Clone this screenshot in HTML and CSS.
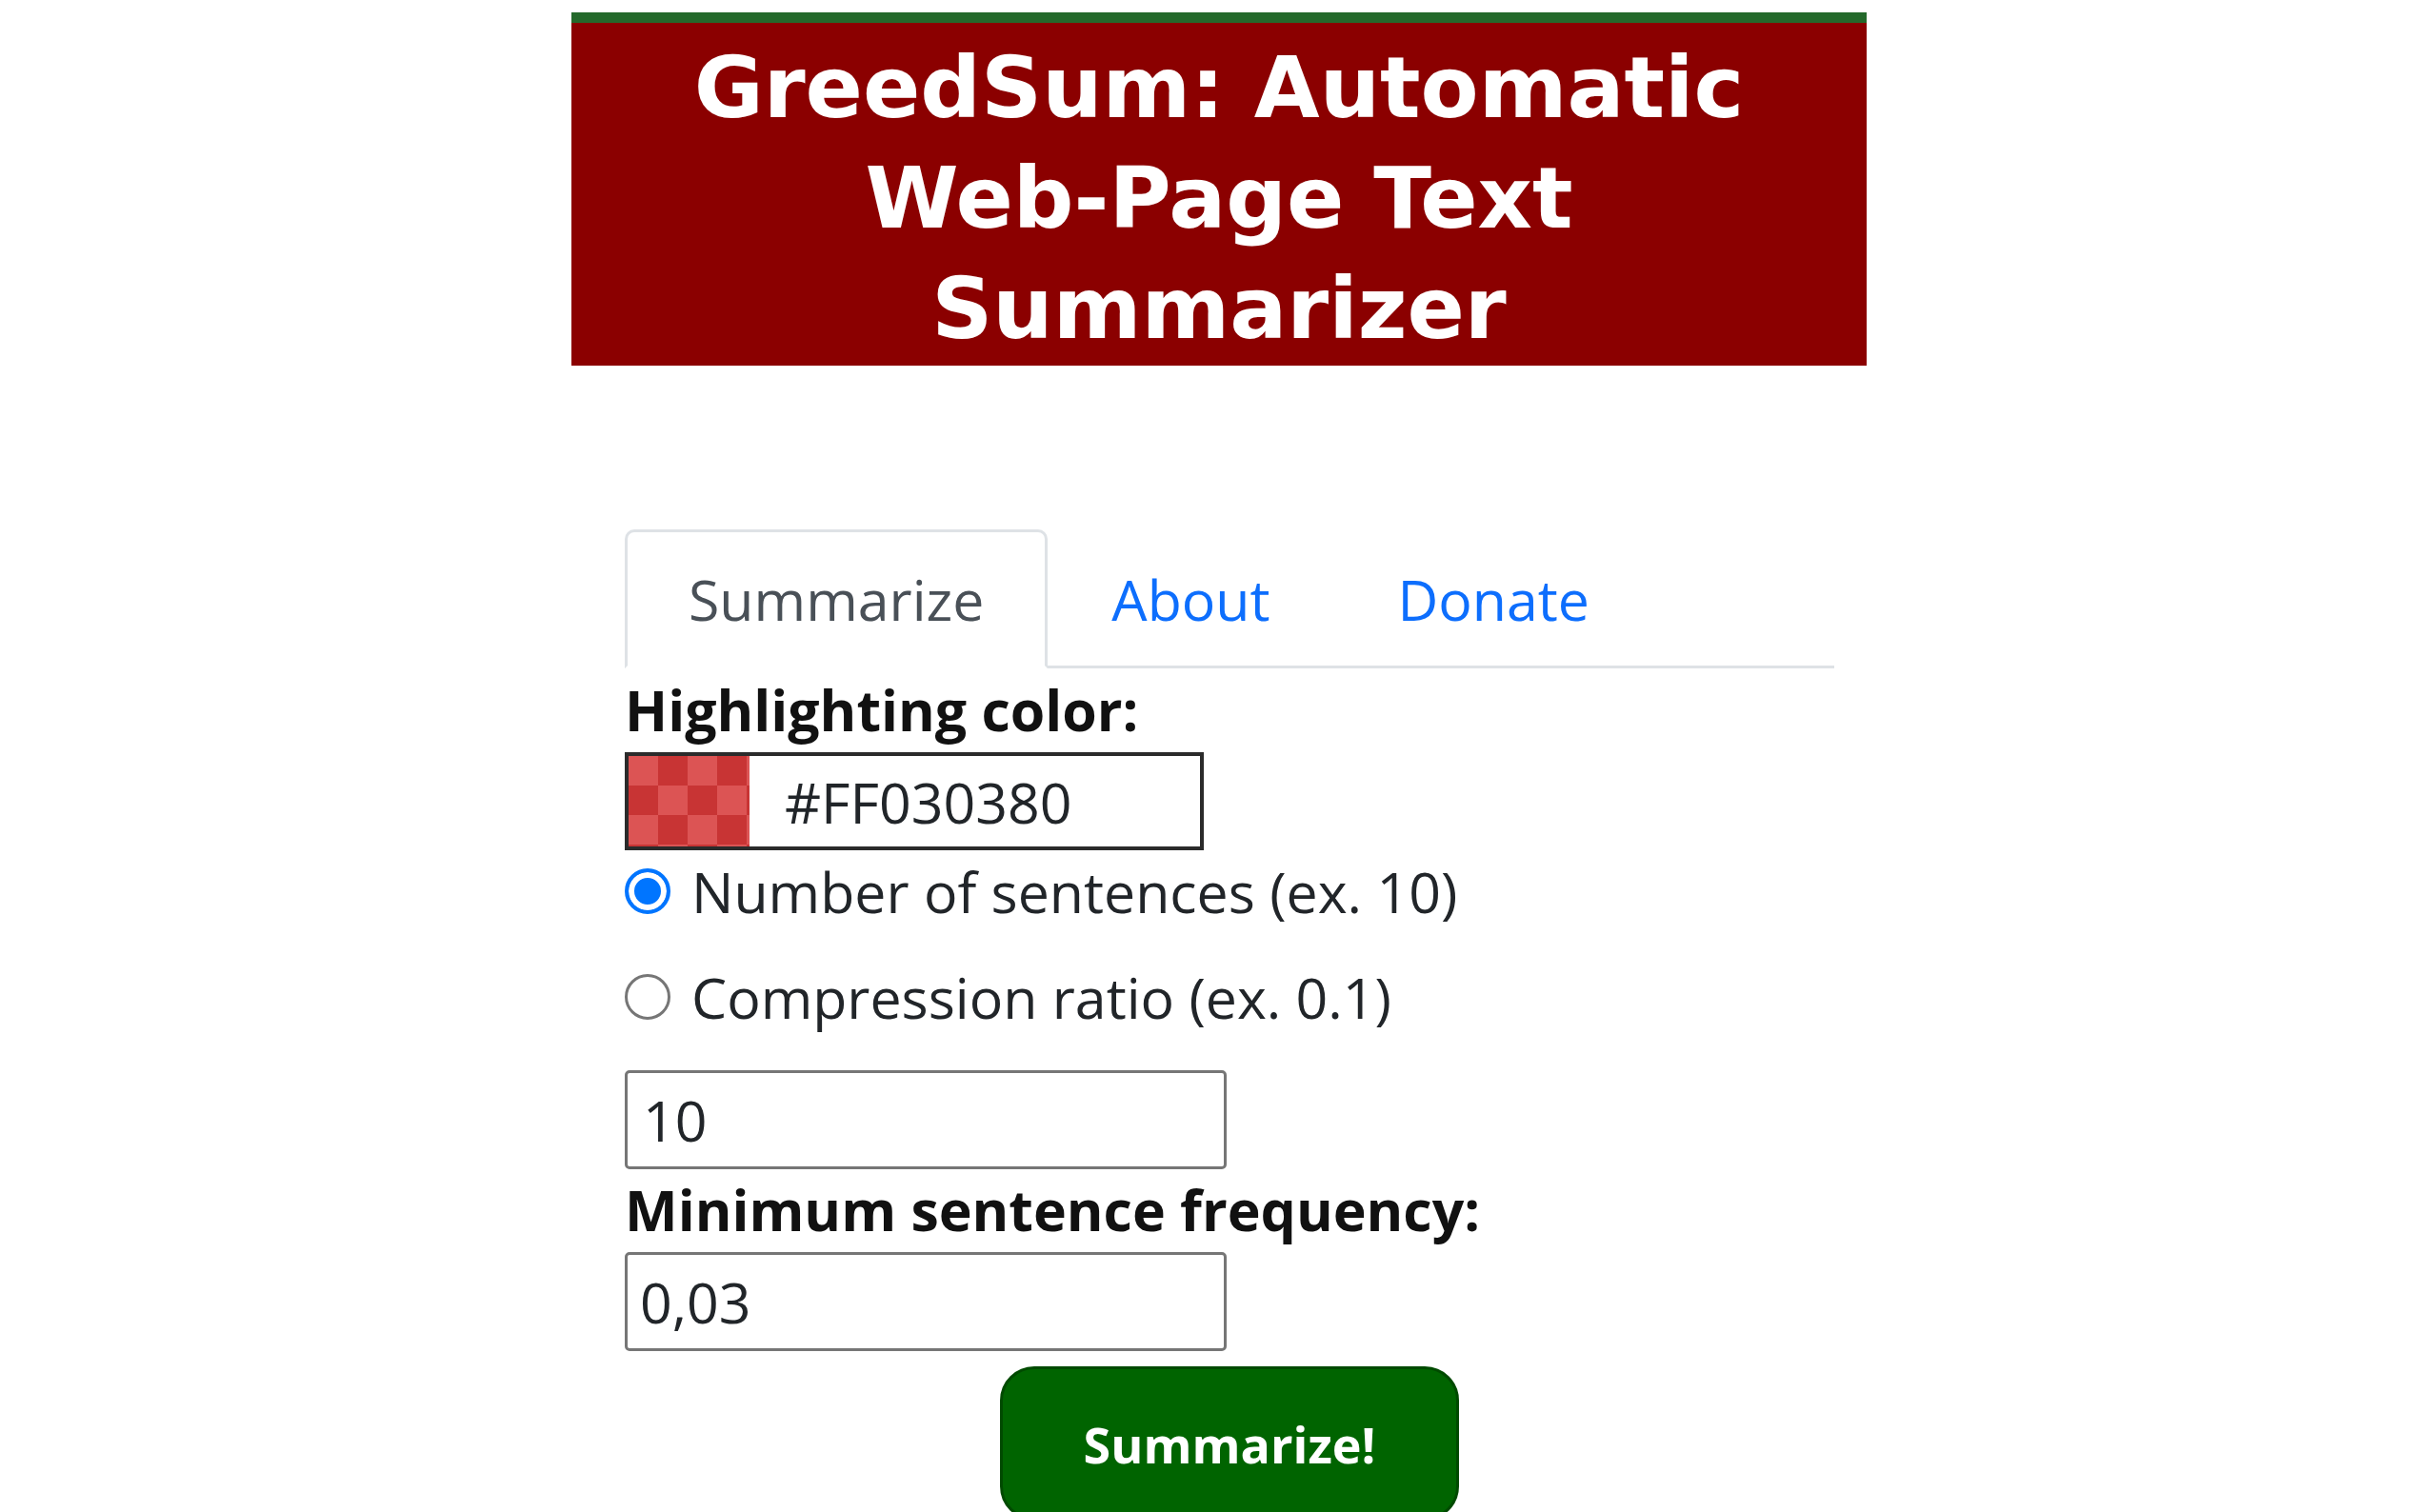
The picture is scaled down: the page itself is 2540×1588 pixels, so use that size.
FILE: index.html
```html
<!DOCTYPE html>
<html lang="en">
<head>
<meta charset="utf-8">
<title>GreedSum</title>
<link rel="stylesheet" href="styles.css">
</head>
<body>
<div class="page">
  <header class="banner">
    <h1 class="banner-title">GreedSum: Automatic<br>Web-Page Text<br>Summarizer</h1>
  </header>
  <main class="content">
    <nav class="tabs">
      <a class="tab tab-active">Summarize</a>
      <a class="tab">About</a>
      <a class="tab">Donate</a>
    </nav>
    <form class="form">
      <div class="field-label">Highlighting color:</div>
      <div class="color-input">
        <span class="swatch"></span>
        <span class="color-value">#FF030380</span>
      </div>
      <div class="radio-row radio-row-first">
        <span class="radio radio-checked"></span>
        <span class="radio-text">Number of sentences (ex. 10)</span>
      </div>
      <div class="radio-row radio-row-second">
        <span class="radio"></span>
        <span class="radio-text">Compression ratio (ex. 0.1)</span>
      </div>
      <div class="text-input text-input-count">10</div>
      <div class="field-label field-label-min">Minimum sentence frequency:</div>
      <div class="text-input text-input-freq">0,03</div>
      <div class="button-row">
        <button type="button" class="submit">Summarize!</button>
      </div>
    </form>
  </main>
</div>
</body>
</html>
```

FILE: styles.css
```css
html, body {
  margin: 0;
  padding: 0;
  background: #ffffff;
}

body {
  font-family: "Open Sans", "Noto Sans", sans-serif;
  color: #212529;
  font-size: 59px;
}

.page {
  width: 1360px;
  margin-left: 600px;
  padding-top: 13px;
}

.banner {
  background: #8b0000;
  border-top: 11px solid #24692b;
  padding: 10px 0 2px;
}

.banner-title {
  margin: 0;
  color: #ffffff;
  font-family: "DejaVu Sans", "Open Sans", sans-serif;
  font-weight: 700;
  font-size: 89px;
  line-height: 116px;
  text-align: center;
}

.content {
  margin-left: 56px;
  width: 1270px;
}

.tabs {
  display: flex;
  margin-top: 172px;
  border-bottom: 3px solid #dee2e6;
}

.tab {
  display: block;
  padding: 35px 64px 35px;
  line-height: 70px;
  border: 3px solid transparent;
  border-radius: 10px 10px 0 0;
  margin-bottom: -3px;
  color: #0d6efd;
}

.tab-active {
  color: #495057;
  border-color: #dee2e6 #dee2e6 #ffffff;
}

.form {
  display: flex;
  flex-direction: column;
  align-items: flex-start;
}

.field-label {
  font-weight: 700;
  line-height: 70px;
  margin-top: 8px;
  color: #111111;
}

.field-label-min {
  margin-top: 7px;
}

.color-input {
  margin-top: 10px;
  width: 608px;
  height: 103px;
  box-sizing: border-box;
  border: 4px solid #2b2b2b;
  display: flex;
  align-items: center;
}

.swatch {
  align-self: stretch;
  width: 127px;
  background-color: #dc5454;
  background-image: conic-gradient(#c83434 25%, transparent 0 50%, #c83434 0 75%, transparent 0);
  background-size: 62px 62px;
}

.color-value {
  margin-left: 37px;
  line-height: 70px;
}

.radio-row {
  display: flex;
  align-items: center;
  line-height: 70px;
}

.radio-row-first {
  margin-top: 8px;
}

.radio-row-second {
  margin-top: 41px;
}

.radio {
  width: 48px;
  height: 48px;
  box-sizing: border-box;
  border-radius: 50%;
  border: 3px solid #767676;
  background: #ffffff;
  margin-right: 22px;
  flex: none;
}

.radio-checked {
  border: 4px solid #0075ff;
  box-shadow: inset 0 0 0 6px #ffffff;
  background: #0075ff;
}

.text-input {
  margin-top: 42px;
  width: 632px;
  height: 104px;
  box-sizing: border-box;
  border: 3px solid #767676;
  border-radius: 5px;
  padding-left: 16px;
  display: flex;
  align-items: center;
  line-height: 70px;
}

.text-input-freq {
  margin-top: 10px;
  padding-left: 13px;
}

.button-row {
  align-self: stretch;
  display: flex;
  justify-content: center;
  margin-top: 16px;
}

.submit {
  width: 482px;
  height: 162px;
  background: #006400;
  border: 3px solid #004a00;
  border-radius: 36px;
  color: #ffffff;
  font-family: inherit;
  font-size: 52px;
  font-weight: 700;
  padding: 0;
}
```
